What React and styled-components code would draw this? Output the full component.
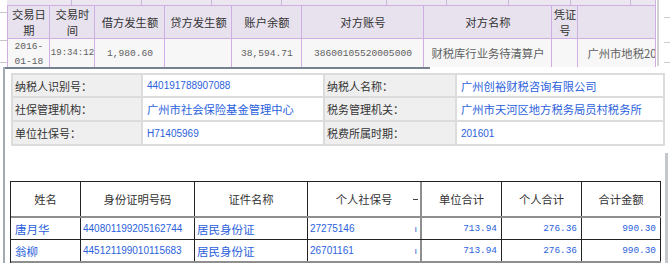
import React from "react";
import styled, { createGlobalStyle } from "styled-components";

const GlobalStyle = createGlobalStyle`
  html, body { margin: 0; padding: 0; background: #fff; }
  body {
    width: 671px;
    height: 263px;
    overflow: hidden;
    font-family: "Noto Sans CJK SC", "Liberation Sans", sans-serif;
  }
  * { box-sizing: border-box; }
`;

const CJK = `"Noto Sans CJK SC", sans-serif`;
const MONO = `"Liberation Mono", "Noto Sans CJK SC", monospace`;
const SANS = `"Liberation Sans", "Noto Sans CJK SC", sans-serif`;
const BLUE = "#2b5fdc";

const Page = styled.div`
  position: relative;
  width: 671px;
  height: 263px;
  overflow: hidden;
  background: #fff;
`;

/* ---------- background grid ---------- */
const Backdrop = styled.div`
  display: flex;
  align-items: flex-start;
`;

const Gutter = styled.div`
  width: 8px;
  display: flex;
  flex-direction: column;
`;

const GutterRule = styled.div`
  height: ${(p) => p.$h}px;
  border-bottom: 1px solid #c6c6c6;
`;

const GridWrap = styled.div`
  width: 649px;
  display: flex;
  flex-direction: column;
`;

const TopStrip = styled.div`
  display: flex;
  height: 5px;
  background: #ebe6f0;
`;

const StripCell = styled.div`
  width: ${(p) => p.$w}px;
  border-right: 1px solid #c9b8da;
`;

const GridRow = styled.div`
  display: grid;
  grid-template-columns: 42px 45px 70px 67px 70px 122px 128px 26px 79px;
  height: ${(p) => p.$h}px;
  border-top: 1px solid #cfaee3;
`;

const HeadCell = styled.div`
  border-left: 1px solid #cfaee3;
  border-right: ${(p) => (p.$last ? "1px solid #cfaee3" : "none")};
  background: #e8e2ee;
  color: #333;
  font-family: ${CJK};
  font-size: 11.3px;
  line-height: 16px;
  display: flex;
  align-items: center;
  justify-content: center;
  text-align: center;
  overflow: hidden;
`;

const DataCell = styled.div`
  border-left: 1px solid #cfaee3;
  border-right: ${(p) => (p.$last ? "1px solid #cfaee3" : "none")};
  background: #f7f7f7;
  color: #606060;
  font-family: ${(p) => (p.$cjk ? CJK : MONO)};
  font-size: ${(p) => (p.$cjk ? "11.3px" : p.$small ? "9px" : "9.6px")};
  line-height: 15px;
  display: flex;
  align-items: center;
  justify-content: ${(p) => (p.$left ? "flex-start" : "center")};
  padding-left: ${(p) => (p.$left ? "9px" : "0")};
  text-align: center;
  white-space: ${(p) => (p.$wrap ? "normal" : "nowrap")};
  overflow: hidden;
`;

const RightGutter = styled.div`
  width: 14px;
  height: 66px;
  margin-left: 1px;
  border-left: 2px solid #d2d2d2;
  display: flex;
  flex-direction: column;
  padding-left: 5px;
`;

const Tick = styled.div`
  width: 6px;
  height: ${(p) => p.$h}px;
  border-bottom: 1px solid #cccccc;
`;

/* ---------- dialog ---------- */
const Dialog = styled.div`
  position: absolute;
  top: 67px;
  left: 3px;
  right: 0;
  bottom: 0;
  background: #fff;
  border-left: 2px solid #a3aab2;
  display: flex;
  flex-direction: column;
`;

const TopEdge = styled.div`
  width: 425px;
  height: 2px;
  background: #76828e;
`;

const InfoGrid = styled.div`
  margin: 4px 0 0 6px;
  width: 654px;
  display: grid;
  grid-template-columns: 128px 180px 130px 206px;
  grid-template-rows: 21px 22px 22px;
  gap: 2px;
  padding: 2px;
  background: #dcdcdc;
`;

const Label = styled.div`
  background: #efefef;
  color: #333;
  font-family: ${CJK};
  font-size: 11px;
  display: flex;
  align-items: center;
  padding-left: 2px;
  white-space: nowrap;
`;

const Value = styled.div`
  background: #fff;
  color: ${BLUE};
  font-family: ${(p) => (p.$num ? SANS : CJK)};
  font-size: ${(p) => (p.$num ? "10px" : "11.3px")};
  display: flex;
  align-items: center;
  padding-left: 4px;
  white-space: nowrap;
`;

const Section = styled.div`
  margin-top: 7px;
  margin-right: 3px;
  flex: 1;
  border-right: 3px solid #c4c8cc;
  padding: 28px 0 0 5px;
`;

const Table = styled.div`
  width: 651px;
  border-left: 1px solid #222;
  border-top: 1px solid #222;
  display: flex;
  flex-direction: column;
`;

const TRow = styled.div`
  display: grid;
  grid-template-columns: 70px 114px 113px 114px 80px 80px 79px;
  height: ${(p) => p.$h}px;
  border-bottom: ${(p) => p.$bottom};
`;

const TH = styled.div`
  border-right: ${(p) => (p.$gray ? "2px solid #8e8e8e" : "1px solid #222")};
  color: #333;
  font-family: ${CJK};
  font-size: 11.3px;
  display: flex;
  align-items: center;
  justify-content: center;
  position: relative;
`;

const TD = styled.div`
  border-right: ${(p) => (p.$gray ? "2px solid #8e8e8e" : "1px solid #222")};
  color: ${BLUE};
  font-family: ${(p) => (p.$font === "cjk" ? CJK : p.$font === "mono" ? MONO : SANS)};
  font-size: ${(p) => (p.$font === "cjk" ? "11.5px" : p.$font === "mono" ? "9.4px" : "10px")};
  display: flex;
  align-items: center;
  justify-content: ${(p) => (p.$right ? "flex-end" : "space-between")};
  padding: 0 ${(p) => (p.$right ? "4px" : "3px")} 0 ${(p) => p.$pl ?? 2}px;
  white-space: nowrap;
  overflow: hidden;
`;

const Mark = styled.span`
  font-family: ${SANS};
  font-size: 9px;
  color: ${(p) => p.$c};
`;

const HeadMark = styled.span`
  position: absolute;
  right: 2px;
  top: 50%;
  width: 5px;
  height: 1px;
  background: #444;
`;

const stripWidths = [65, 70, 70, 70, 105, 60, 62, 62, 60, 25];
const gridHead = ["交易日期", "交易时间", "借方发生额", "贷方发生额", "账户余额", "对方账号", "对方名称", "凭证号", ""];

const info = [
  ["纳税人识别号：", "440191788907088", true, "纳税人名称：", "广州创裕财税咨询有限公司", false],
  ["社保管理机构：", "广州市社会保险基金管理中心", false, "税务管理机关：", "广州市天河区地方税务局员村税务所", false],
  ["单位社保号：", "H71405969", true, "税费所属时期：", "201601", true],
];

const people = [
  ["唐月华", "440801199205162744", "居民身份证", "27275146", "713.94", "276.36", "990.30"],
  ["翁柳", "445121199010115683", "居民身份证", "26701161", "713.94", "276.36", "990.30"],
];

const tableHead = ["姓名", "身份证明号码", "证件名称", "个人社保号", "单位合计", "个人合计", "合计金额"];

export default function App() {
  return (
    <Page>
      <GlobalStyle />
      <Backdrop>
        <Gutter>
          <GutterRule $h={13} />
          <GutterRule $h={28} />
          <GutterRule $h={22} />
        </Gutter>
        <GridWrap>
          <TopStrip>
            {stripWidths.map((w, i) => (
              <StripCell key={i} $w={w} />
            ))}
          </TopStrip>
          <GridRow $h={33}>
            {gridHead.map((h, i) => (
              <HeadCell key={i} $last={i === gridHead.length - 1}>
                {h}
              </HeadCell>
            ))}
          </GridRow>
          <GridRow $h={30}>
            <DataCell $wrap>2016-01-18</DataCell>
            <DataCell $small>19:34:12</DataCell>
            <DataCell>1,980.60</DataCell>
            <DataCell />
            <DataCell>38,594.71</DataCell>
            <DataCell>38600105520005000</DataCell>
            <DataCell $cjk>财税库行业务待清算户</DataCell>
            <DataCell />
            <DataCell $cjk $left $last>广州市地税20</DataCell>
          </GridRow>
        </GridWrap>
        <RightGutter>
          <Tick $h={18} />
          <Tick $h={25} />
          <Tick $h={20} />
        </RightGutter>
      </Backdrop>

      <Dialog>
        <TopEdge />
        <InfoGrid>
          {info.map((r, i) => (
            <React.Fragment key={i}>
              <Label>{r[0]}</Label>
              <Value $num={r[2]}>{r[1]}</Value>
              <Label>{r[3]}</Label>
              <Value $num={r[5]}>{r[4]}</Value>
            </React.Fragment>
          ))}
        </InfoGrid>
        <Section>
          <Table>
            <TRow $h={36} $bottom="2px solid #8e8e8e">
              {tableHead.map((h, i) => (
                <TH key={i} $gray={i === 3}>
                  {h}
                  {i === 3 && <HeadMark />}
                </TH>
              ))}
            </TRow>
            {people.map((p, i) => (
              <TRow
                key={i}
                $h={i === 0 ? 22 : 23}
                $bottom={i === 0 ? "1px solid #222" : "2px solid #8e8e8e"}
              >
                <TD $font="cjk" $pl={4}>{p[0]}</TD>
                <TD>{p[1]}</TD>
                <TD $font="cjk">{p[2]}</TD>
                <TD $gray>
                  <span>{p[3]}</span>
                  <Mark $c={BLUE}>ı</Mark>
                </TD>
                <TD $font="mono" $right>{p[4]}</TD>
                <TD $font="mono" $right>{p[5]}</TD>
                <TD $font="mono" $right>{p[6]}</TD>
              </TRow>
            ))}
          </Table>
        </Section>
      </Dialog>
    </Page>
  );
}
